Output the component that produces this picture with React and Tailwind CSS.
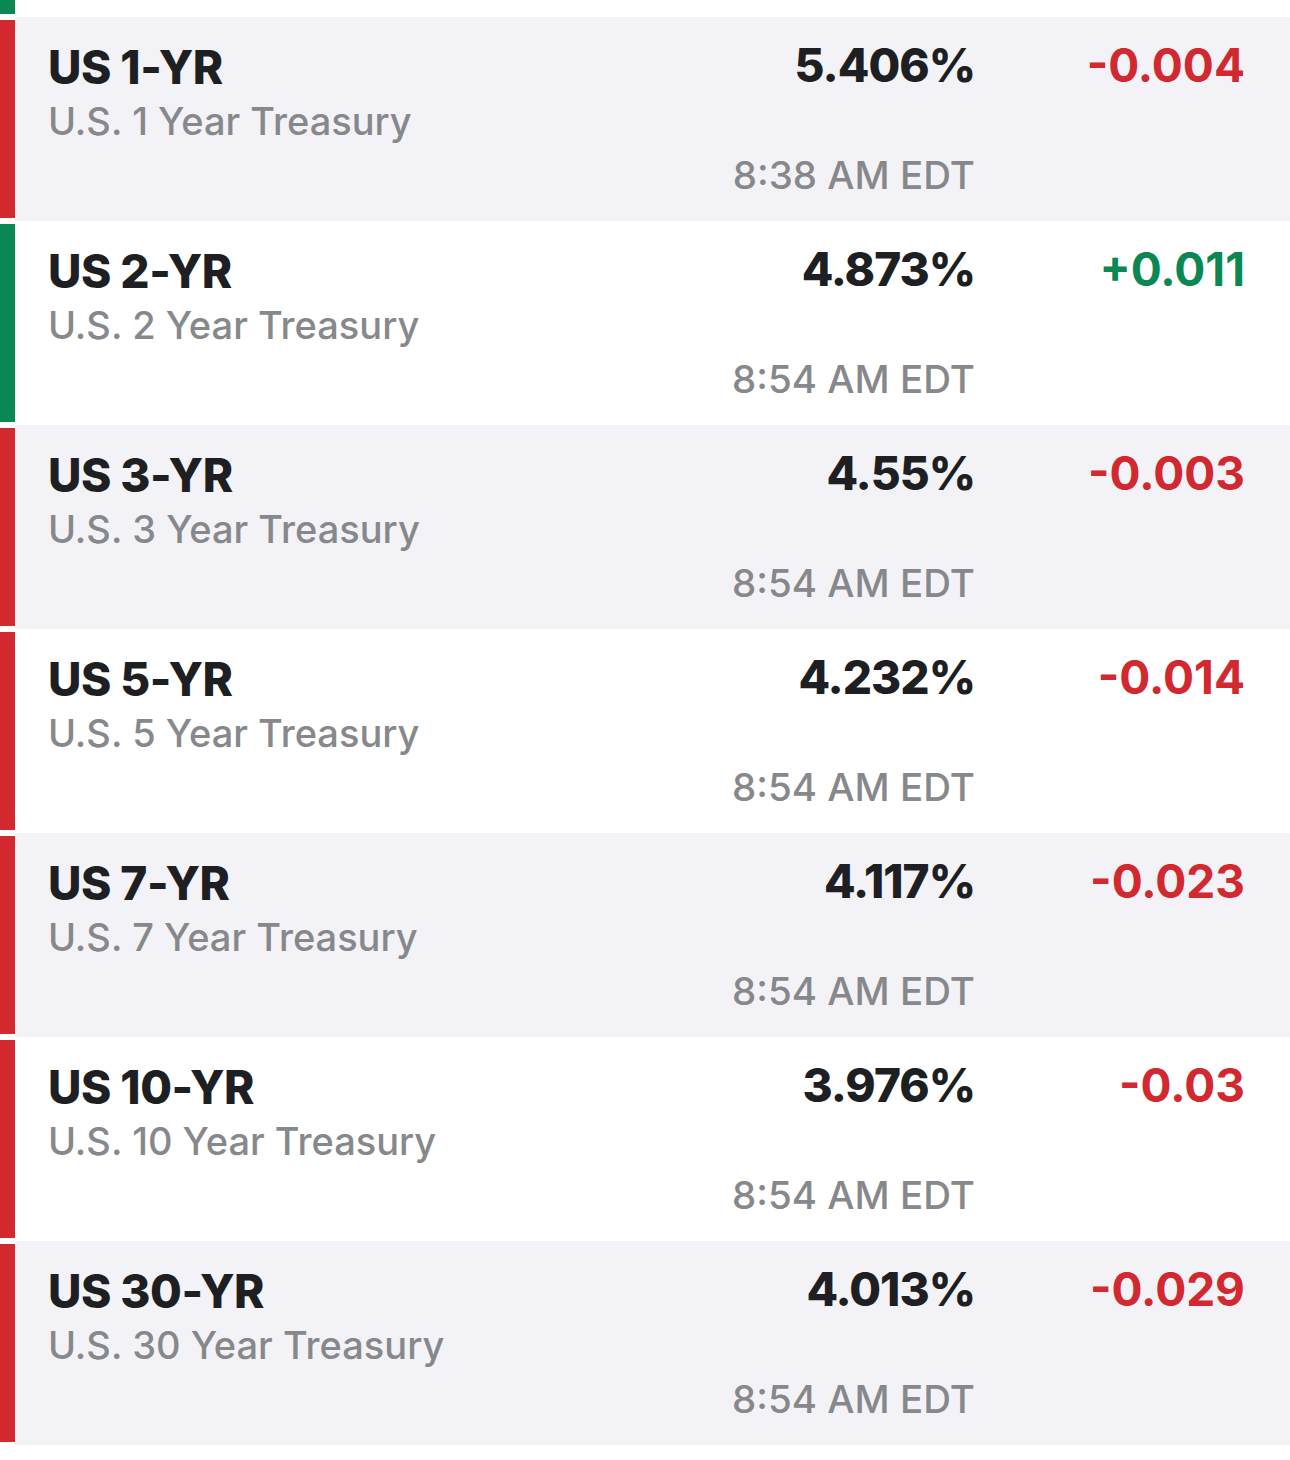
const rows = [
  { sym: "US 1-YR", name: "U.S. 1 Year Treasury", price: "5.406%", change: "-0.004", time: "8:38 AM EDT" },
  { sym: "US 2-YR", name: "U.S. 2 Year Treasury", price: "4.873%", change: "+0.011", time: "8:54 AM EDT" },
  { sym: "US 3-YR", name: "U.S. 3 Year Treasury", price: "4.55%", change: "-0.003", time: "8:54 AM EDT" },
  { sym: "US 5-YR", name: "U.S. 5 Year Treasury", price: "4.232%", change: "-0.014", time: "8:54 AM EDT" },
  { sym: "US 7-YR", name: "U.S. 7 Year Treasury", price: "4.117%", change: "-0.023", time: "8:54 AM EDT" },
  { sym: "US 10-YR", name: "U.S. 10 Year Treasury", price: "3.976%", change: "-0.03", time: "8:54 AM EDT" },
  { sym: "US 30-YR", name: "U.S. 30 Year Treasury", price: "4.013%", change: "-0.029", time: "8:54 AM EDT" },
];

function Row({ row, index }) {
  const up = row.change.startsWith("+");
  return (
    <div className="flex h-[204px] bg-white">
      <div className={up ? "my-[3px] w-[15px] shrink-0 bg-[#0a8752]" : "my-[3px] w-[15px] shrink-0 bg-[#d2282f]"} />
      <div className={index % 2 === 0 ? "flex flex-1 bg-[#f3f3f7]" : "flex flex-1 bg-white"}>
        <div className="flex flex-1 flex-col pl-[33px] pt-[22px]">
          <div className="text-[46px] leading-[56px] font-extrabold tracking-[-0.5px] text-[#1d1f23]">{row.sym}</div>
          <div className="text-[38px] leading-[52px] font-medium text-[#86888b]">{row.name}</div>
        </div>
        <div className="flex w-[300px] flex-col items-end pt-[20px] pb-[20px]">
          <div className="text-[46px] leading-[56px] font-extrabold tracking-[-1px] text-[#1d1f23]">{row.price}</div>
          <div className="mt-auto text-[38.5px] leading-[52px] font-medium text-[#86888b]">{row.time}</div>
        </div>
        <div className="flex w-[315px] justify-end pr-[45px] pt-[20px]">
          <div className={up ? "text-[46px] leading-[56px] font-bold text-[#0a8752]" : "text-[46px] leading-[56px] font-bold text-[#d2282f]"}>{row.change}</div>
        </div>
      </div>
    </div>
  );
}

export default function App() {
  return (
    <div className="w-[1290px] h-[1460px] bg-white font-['Inter',sans-serif]">
      <div className="flex h-[17px]">
        <div className="mb-[3px] w-[15px] bg-[#0a8752]" />
      </div>
      {rows.map((row, i) => (
        <Row key={row.sym} row={row} index={i} />
      ))}
    </div>
  );
}
